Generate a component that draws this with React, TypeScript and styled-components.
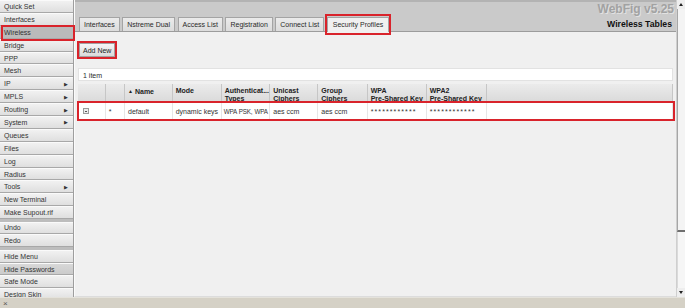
import React from "react";
import styled, { createGlobalStyle, css } from "styled-components";

const GlobalStyle = createGlobalStyle`
  html, body {
    margin: 0;
    padding: 0;
    width: 685px;
    height: 308px;
    overflow: hidden;
    background: #f0f0f0;
  }
  body {
    font-family: "Liberation Sans", Arial, sans-serif;
    font-size: 7px;
    color: #2a2a2a;
  }
`;

const marked = css`
  position: relative;
  &::after {
    content: "";
    position: absolute;
    border: 2px solid #d9232b;
    pointer-events: none;
    z-index: 3;
  }
`;

const Page = styled.div`
  display: flex;
  flex-direction: column;
  width: 685px;
  height: 308px;
`;

const Main = styled.div`
  display: flex;
  height: 297px;
  overflow: hidden;
`;

const Sidebar = styled.nav`
  width: 73px;
  flex-shrink: 0;
  display: flex;
  flex-direction: column;
  background: #bdbdbd;
  border-right: 1px solid #9e9e9e;
`;

const MenuGroup = styled.div`
  display: flex;
  flex-direction: column;
  & + & {
    margin-top: 2.4px;
  }
`;

const MenuItem = styled.div<{ $active?: boolean; $toggled?: boolean }>`
  height: 12.9px;
  box-sizing: border-box;
  flex-shrink: 0;
  display: flex;
  align-items: center;
  justify-content: space-between;
  padding: 0 5px 0 4px;
  border-top: 1px solid #fafafa;
  border-bottom: 1px solid #a8a8a8;
  background: linear-gradient(#f1f1f1, #dfdfdf);
  color: #333;
  white-space: nowrap;
  ${(p) =>
    p.$toggled &&
    css`
      background: linear-gradient(#d8d8d8, #cbcbcb);
    `}
  ${(p) =>
    p.$active &&
    css`
      background: #bababa;
      border-top-color: #c8c8c8;
      ${marked}
      &::after {
        top: -2px;
        bottom: -3px;
        left: 1px;
        right: -2px;
      }
    `}
`;

const SubArrow = styled.span`
  font-size: 5px;
  color: #333;
`;

const Content = styled.section`
  flex: 1;
  min-width: 0;
  display: flex;
  flex-direction: column;
  background: #f0f0f0;
  border-left: 1px solid #fbfbfb;
  border-bottom: 1px solid #dcdcdc;
`;

const Header = styled.header`
  height: 32px;
  box-sizing: border-box;
  display: flex;
  align-items: flex-end;
  padding-left: 4px;
  background: #cacaca;
  border-top: 2px solid #b3b3b3;
  border-bottom: 1px solid #9c9c9c;
`;

const Tabs = styled.div`
  display: flex;
  align-items: flex-end;
  gap: 2.5px;
`;

const Tab = styled.div<{ $selected?: boolean }>`
  height: 13px;
  line-height: 13px;
  padding: 0 4px;
  background: linear-gradient(#ebebeb, #dcdcdc);
  border: 1px solid #a4a4a4;
  border-bottom: none;
  color: #2a2a2a;
  white-space: nowrap;
  ${(p) =>
    p.$selected &&
    css`
      height: 14px;
      margin-bottom: -1px;
      padding: 0 5px;
      background: #f0f0f0;
      ${marked}
      &::after {
        top: -4px;
        bottom: -3px;
        left: -3px;
        right: -3px;
      }
    `}
`;

const TitleBlock = styled.div`
  margin-left: auto;
  align-self: stretch;
  display: flex;
  flex-direction: column;
  align-items: flex-end;
  justify-content: space-between;
  padding: 1px 2px 2px 0;
`;

const Brand = styled.div`
  font-size: 12px;
  line-height: 13px;
  font-weight: bold;
  color: #a2a2a2;
  text-shadow: 1px 1px 0 #e2e2e2;
`;

const PageTitle = styled.div`
  font-size: 8.7px;
  line-height: 10px;
  font-weight: bold;
  color: #111;
  padding-right: 2px;
`;

const Body = styled.div`
  flex: 1;
  display: flex;
  flex-direction: column;
  align-items: flex-start;
  padding: 11px 3px 0;
`;

const Button = styled.button`
  ${marked}
  height: 14px;
  margin-left: 1px;
  padding: 0 3px;
  font: inherit;
  color: #222;
  background: linear-gradient(#f6f6f6, #dadada);
  border: 1px solid #a2a2a2;
  &::after {
    inset: -3px;
  }
`;

const ItemBar = styled.div`
  align-self: stretch;
  margin-top: 11px;
  height: 13px;
  line-height: 13px;
  padding-left: 4px;
  background: #fff;
  border: 1px solid #e2e2e2;
  box-sizing: border-box;
`;

const cols = "27.7px 19.3px 47.7px 49px 48.6px 48px 49.4px 59px 60.6px 1fr";

const Table = styled.div`
  align-self: stretch;
  margin-top: 3px;
  display: flex;
  flex-direction: column;
`;

const HeadRow = styled.div`
  display: grid;
  grid-template-columns: ${cols};
  height: 19px;
  background: linear-gradient(#ebebeb, #d9d9d9);
`;

const HeadCell = styled.div`
  padding: 3px 0 0 3px;
  font-weight: bold;
  line-height: 8.3px;
  color: #222;
  overflow: hidden;
  white-space: nowrap;
  border-right: 1px solid #c6c6c6;
`;

const SortMark = styled.span`
  font-size: 5px;
  margin-right: 2px;
  vertical-align: 1px;
`;

const DataRow = styled.div`
  ${marked}
  display: grid;
  grid-template-columns: ${cols};
  height: 16px;
  background: #fff;
  &::after {
    top: -2px;
    bottom: -2px;
    left: -1px;
    right: -2px;
  }
`;

const Cell = styled.div<{ $secret?: boolean; $tight?: boolean }>`
  display: flex;
  align-items: center;
  padding-left: 3px;
  overflow: hidden;
  white-space: nowrap;
  color: #333;
  border-right: 1px solid #e6e6e6;
  ${(p) =>
    p.$secret &&
    css`
      letter-spacing: 1.1px;
    `}
  ${(p) =>
    p.$tight &&
    css`
      padding-left: 2px;
      font-size: 6.3px;
      letter-spacing: -0.2px;
      word-spacing: 0.6px;
    `}
`;

const RowToggle = styled.span`
  width: 4px;
  height: 4px;
  margin-left: 2px;
  border: 1px solid #9a9a9a;
  background: #ececec;
  display: flex;
  align-items: center;
  justify-content: center;
  &::before {
    content: "";
    width: 2px;
    height: 1px;
    background: #555;
  }
`;

const Scrollbar = styled.div`
  width: 9px;
  flex-shrink: 0;
  display: flex;
  flex-direction: column;
  background: #eeeeee;
  border-left: 1px solid #cfcfcf;
  box-sizing: border-box;
`;

const ScrollArrow = styled.div<{ $down?: boolean }>`
  height: 9px;
  display: flex;
  align-items: center;
  justify-content: center;
  &::before {
    content: "";
    border-left: 2.5px solid transparent;
    border-right: 2.5px solid transparent;
    ${(p) =>
      p.$down
        ? css`
            border-top: 3px solid #222;
          `
        : css`
            border-bottom: 3px solid #222;
          `}
  }
`;

const Thumb = styled.div`
  height: 221px;
  background: #f4f4f4;
  border-left: 1px solid #a6a6a6;
  border-bottom: 2px solid #6f6f6f;
`;

const Track = styled.div`
  flex: 1;
  border-left: 1px solid #dadada;
  background: #f6f6f6;
`;

const StatusBar = styled.footer`
  height: 11px;
  display: flex;
  align-items: center;
  padding-left: 3px;
  background: #d5d1c6;
  border-top: 1px solid #e4e2db;
  box-sizing: border-box;
  font-size: 8px;
  color: #555;
`;

type Entry = { label: string; sub?: boolean; active?: boolean; toggled?: boolean };

const menu: Entry[][] = [
  [
    { label: "Quick Set" },
    { label: "Interfaces" },
    { label: "Wireless", active: true },
    { label: "Bridge" },
    { label: "PPP" },
    { label: "Mesh" },
    { label: "IP", sub: true },
    { label: "MPLS", sub: true },
    { label: "Routing", sub: true },
    { label: "System", sub: true },
    { label: "Queues" },
    { label: "Files" },
    { label: "Log" },
    { label: "Radius" },
    { label: "Tools", sub: true },
    { label: "New Terminal" },
    { label: "Make Supout.rif" },
  ],
  [{ label: "Undo" }, { label: "Redo" }],
  [
    { label: "Hide Menu" },
    { label: "Hide Passwords", toggled: true },
    { label: "Safe Mode" },
    { label: "Design Skin" },
  ],
];

const tabs = [
  "Interfaces",
  "Nstreme Dual",
  "Access List",
  "Registration",
  "Connect List",
  "Security Profiles",
];

const headers: [string, string][] = [
  ["", ""],
  ["", ""],
  ["Name", ""],
  ["Mode", ""],
  ["Authenticat...", "Types"],
  ["Unicast", "Ciphers"],
  ["Group", "Ciphers"],
  ["WPA", "Pre-Shared Key"],
  ["WPA2", "Pre-Shared Key"],
  ["", ""],
];

export default function App() {
  return (
    <>
      <GlobalStyle />
      <Page>
        <Main>
          <Sidebar>
            {menu.map((group, gi) => (
              <MenuGroup key={gi}>
                {group.map((item) => (
                  <MenuItem key={item.label} $active={item.active} $toggled={item.toggled}>
                    {item.label}
                    {item.sub && <SubArrow>▶</SubArrow>}
                  </MenuItem>
                ))}
              </MenuGroup>
            ))}
          </Sidebar>

          <Content>
            <Header>
              <Tabs>
                {tabs.map((t) => (
                  <Tab key={t} $selected={t === "Security Profiles"}>
                    {t}
                  </Tab>
                ))}
              </Tabs>
              <TitleBlock>
                <Brand>WebFig v5.25</Brand>
                <PageTitle>Wireless Tables</PageTitle>
              </TitleBlock>
            </Header>

            <Body>
              <Button>Add New</Button>
              <ItemBar>1 item</ItemBar>
              <Table>
                <HeadRow>
                  {headers.map(([a, b], i) => (
                    <HeadCell key={i}>
                      {i === 2 && <SortMark>▲</SortMark>}
                      {a}
                      {b && <br />}
                      {b}
                    </HeadCell>
                  ))}
                </HeadRow>
                <DataRow>
                  <Cell>
                    <RowToggle />
                  </Cell>
                  <Cell>*</Cell>
                  <Cell>default</Cell>
                  <Cell>dynamic keys</Cell>
                  <Cell $tight>WPA PSK, WPA</Cell>
                  <Cell>aes ccm</Cell>
                  <Cell>aes ccm</Cell>
                  <Cell $secret>************</Cell>
                  <Cell $secret>************</Cell>
                  <Cell />
                </DataRow>
              </Table>
            </Body>
          </Content>

          <Scrollbar>
            <ScrollArrow />
            <Thumb />
            <Track />
            <ScrollArrow $down />
          </Scrollbar>
        </Main>
        <StatusBar>×</StatusBar>
      </Page>
    </>
  );
}
